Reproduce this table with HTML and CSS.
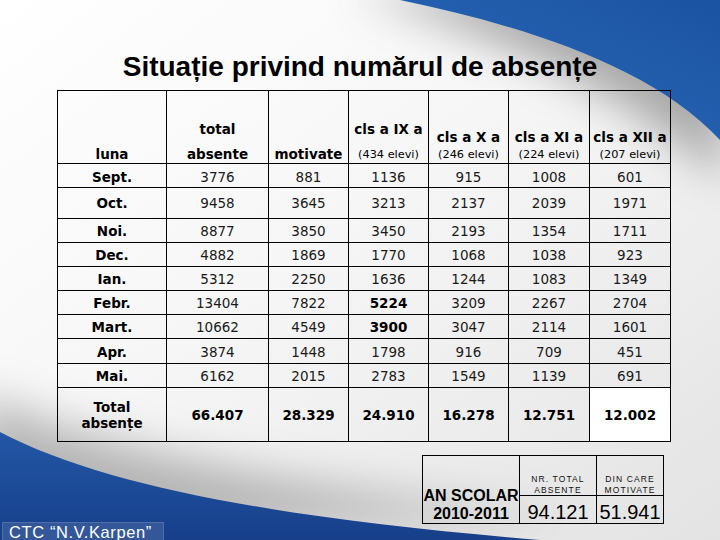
FILE: index.html
```html
<!DOCTYPE html>
<html lang="ro">
<head>
<meta charset="utf-8">
<title>Situație absențe</title>
<link rel="stylesheet" href="styles.css">
</head>
<body>
<div class="slide">
  <svg class="bg" width="720" height="540" viewBox="0 0 720 540" aria-hidden="true">
    <defs>
      <linearGradient id="base" x1="0" y1="0" x2="1" y2="1">
        <stop offset="0" stop-color="#ffffff"/>
        <stop offset="0.45" stop-color="#f6f6f6"/>
        <stop offset="1" stop-color="#e3e3e3"/>
      </linearGradient>
      <linearGradient id="blueTR" x1="0" y1="1" x2="1" y2="0">
        <stop offset="0" stop-color="#2d6cbd"/>
        <stop offset="1" stop-color="#1a53a1"/>
      </linearGradient>
      <linearGradient id="blueBL" x1="0" y1="0" x2="0" y2="1">
        <stop offset="0" stop-color="#2257a6"/>
        <stop offset="1" stop-color="#173f8a"/>
      </linearGradient>
      <filter id="soft" x="-30%" y="-30%" width="160%" height="160%">
        <feGaussianBlur stdDeviation="22"/>
      </filter>
    </defs>
    <rect width="720" height="540" fill="url(#base)"/>
    <path d="M380,-30 C 500,10 640,55 750,160 L750,-30 Z" transform="translate(-26,22)" fill="#8f8f8f" opacity="0.75" filter="url(#soft)"/>
    <path d="M-30,420 C 100,480 300,515 560,545 L-30,560 Z" transform="translate(10,-26)" fill="#9a9a9a" opacity="0.7" filter="url(#soft)"/>
    <path d="M400,0 C 520,25 650,65 720,140 L720,0 Z" fill="url(#blueTR)"/>
    <path d="M0,432 C 110,490 300,520 540,540 L0,540 Z" fill="url(#blueBL)"/>
  </svg>

  <div class="content">
    <h1 class="title">Situație privind numărul de absențe</h1>

    <table class="grid">
      <colgroup>
        <col class="w-luna">
        <col class="w-total">
        <col class="w-mot">
        <col class="w-cls">
        <col class="w-cls">
        <col class="w-cls2">
        <col class="w-cls2">
      </colgroup>
      <tr class="r-head">
        <th><div class="ln-last">luna</div></th>
        <th><div class="ln-total">total</div><div class="ln-last">absente</div></th>
        <th><div class="ln-last">motivate</div></th>
        <th><div class="ln-ix">cls a IX a</div><div class="ln-small">(434 elevi)</div></th>
        <th><div class="ln-x">cls a X a</div><div class="ln-small">(246 elevi)</div></th>
        <th><div class="ln-x">cls a XI a</div><div class="ln-small">(224 elevi)</div></th>
        <th><div class="ln-x">cls a XII a</div><div class="ln-small">(207 elevi)</div></th>
      </tr>
      <tr class="r-sept">
        <td class="m">Sept.</td><td>3776</td><td>881</td><td>1136</td><td>915</td><td>1008</td><td>601</td>
      </tr>
      <tr class="r-oct">
        <td class="m">Oct.</td><td>9458</td><td>3645</td><td>3213</td><td>2137</td><td>2039</td><td>1971</td>
      </tr>
      <tr class="r-std">
        <td class="m">Noi.</td><td>8877</td><td>3850</td><td>3450</td><td>2193</td><td>1354</td><td>1711</td>
      </tr>
      <tr class="r-std">
        <td class="m">Dec.</td><td>4882</td><td>1869</td><td>1770</td><td>1068</td><td>1038</td><td>923</td>
      </tr>
      <tr class="r-std">
        <td class="m">Ian.</td><td>5312</td><td>2250</td><td>1636</td><td>1244</td><td>1083</td><td>1349</td>
      </tr>
      <tr class="r-std">
        <td class="m">Febr.</td><td>13404</td><td>7822</td><td class="b">5224</td><td>3209</td><td>2267</td><td>2704</td>
      </tr>
      <tr class="r-std">
        <td class="m">Mart.</td><td>10662</td><td>4549</td><td class="b">3900</td><td>3047</td><td>2114</td><td>1601</td>
      </tr>
      <tr class="r-apr">
        <td class="m">Apr.</td><td>3874</td><td>1448</td><td>1798</td><td>916</td><td>709</td><td>451</td>
      </tr>
      <tr class="r-std">
        <td class="m">Mai.</td><td>6162</td><td>2015</td><td>2783</td><td>1549</td><td>1139</td><td>691</td>
      </tr>
      <tr class="r-total">
        <td class="m tot-label">Total<br>absențe</td><td class="b">66.407</td><td class="b">28.329</td><td class="b">24.910</td><td class="b">16.278</td><td class="b">12.751</td><td class="b white">12.002</td>
      </tr>
    </table>

    <div class="bottom">
      <div class="ctc">CTC “N.V.Karpen”</div>
      <table class="summary">
        <colgroup>
          <col class="s1">
          <col class="s2">
          <col class="s3">
        </colgroup>
        <tr class="s-top">
          <td class="an" rowspan="2"><div class="an-l1">AN SCOLAR</div><div class="an-l2">2010-2011</div></td>
          <td class="cap"><div class="cap-l1">NR. TOTAL</div><div class="cap-l2">ABSENTE</div></td>
          <td class="cap"><div class="cap-l1">DIN CARE</div><div class="cap-l2">MOTIVATE</div></td>
        </tr>
        <tr class="s-bot">
          <td class="big big-r">94.121</td>
          <td class="big">51.941</td>
        </tr>
      </table>
    </div>
  </div>
</div>
</body>
</html>
```

FILE: styles.css
```css
html, body {
  margin: 0;
  padding: 0;
}

.slide {
  position: relative;
  width: 720px;
  height: 540px;
  overflow: hidden;
  background: #f2f2f2;
  font-family: "DejaVu Sans", "Liberation Sans", sans-serif;
  color: #000;
}

.bg {
  position: absolute;
  left: 0;
  top: 0;
  display: block;
}

.content {
  position: relative;
}

.title {
  margin: 0 0 7px 0;
  padding-top: 51px;
  height: 32px;
  line-height: 32px;
  font-family: "Liberation Sans", Arial, sans-serif;
  font-weight: bold;
  font-size: 28px;
  text-align: center;
  color: #000;
}

/* main table */
.grid {
  border-collapse: collapse;
  table-layout: fixed;
  width: 614px;
  margin-left: 57px;
  font-size: 13.5px;
}

.w-luna { width: 109px; }
.w-total { width: 102px; }
.w-mot { width: 80px; }
.w-cls { width: 80px; }
.w-cls2 { width: 81px; }

.grid th,
.grid td {
  border: 1px solid #000;
  padding: 0;
  text-align: center;
  color: #1a1a1a;
}

.grid th {
  vertical-align: bottom;
  font-weight: bold;
  color: #000;
}

.grid td {
  vertical-align: middle;
  line-height: 16px;
  font-weight: normal;
}

.grid td.m,
.grid td.b {
  font-weight: bold;
  color: #000;
}

.grid td.white {
  background: #ffffff;
}

.r-head { height: 73px; }
.r-sept { height: 24px; }
.r-sept td { padding-top: 3px; }
.r-oct { height: 31px; }
.r-std { height: 24px; }
.r-apr { height: 25px; }
.r-apr td { padding-top: 2px; }
.r-total { height: 54px; }

.tot-label {
  line-height: 21px;
}

.ln-last { line-height: 18px; }
.ln-total { line-height: 32px; }
.ln-ix { line-height: 35px; }
.ln-x { line-height: 20px; }
.ln-small {
  line-height: 16px;
  font-size: 11.3px;
  font-weight: normal;
}

/* bottom area */
.bottom {
  display: flex;
  align-items: flex-end;
  height: 85px;
  margin-top: 14px;
}

.ctc {
  box-sizing: border-box;
  margin-left: 2px;
  width: 162px;
  height: 19px;
  padding-left: 6px;
  background: #34579a;
  border: 1px solid #4f6faa;
  border-bottom: none;
  color: #ffffff;
  font-family: "Liberation Sans", Arial, sans-serif;
  font-size: 16.5px;
  letter-spacing: 0.6px;
  line-height: 18px;
  white-space: nowrap;
}

.summary {
  border-collapse: collapse;
  table-layout: fixed;
  width: 242px;
  margin-left: 258px;
  margin-bottom: 17px;
  font-family: "Liberation Sans", Arial, sans-serif;
  color: #000;
}

.s1 { width: 97px; }
.s2 { width: 77px; }
.s3 { width: 67px; }

.summary td {
  border: 1px solid #000;
  padding: 0;
  text-align: center;
  vertical-align: bottom;
}

.s-top { height: 40px; }
.s-bot { height: 28px; }

.an {
  font-weight: bold;
  font-size: 16px;
  padding-bottom: 1px;
  white-space: nowrap;
}

.an-l1, .an-l2 { line-height: 18px; }

.cap {
  font-size: 8.5px;
  letter-spacing: 1.1px;
  color: #111;
}

.cap-l1 { line-height: 13px; }
.cap-l2 { line-height: 9px; }

.big {
  font-size: 20px;
  line-height: 22px;
  white-space: nowrap;
}

.big-r {
  text-align: right;
  padding-right: 3px;
}
```
